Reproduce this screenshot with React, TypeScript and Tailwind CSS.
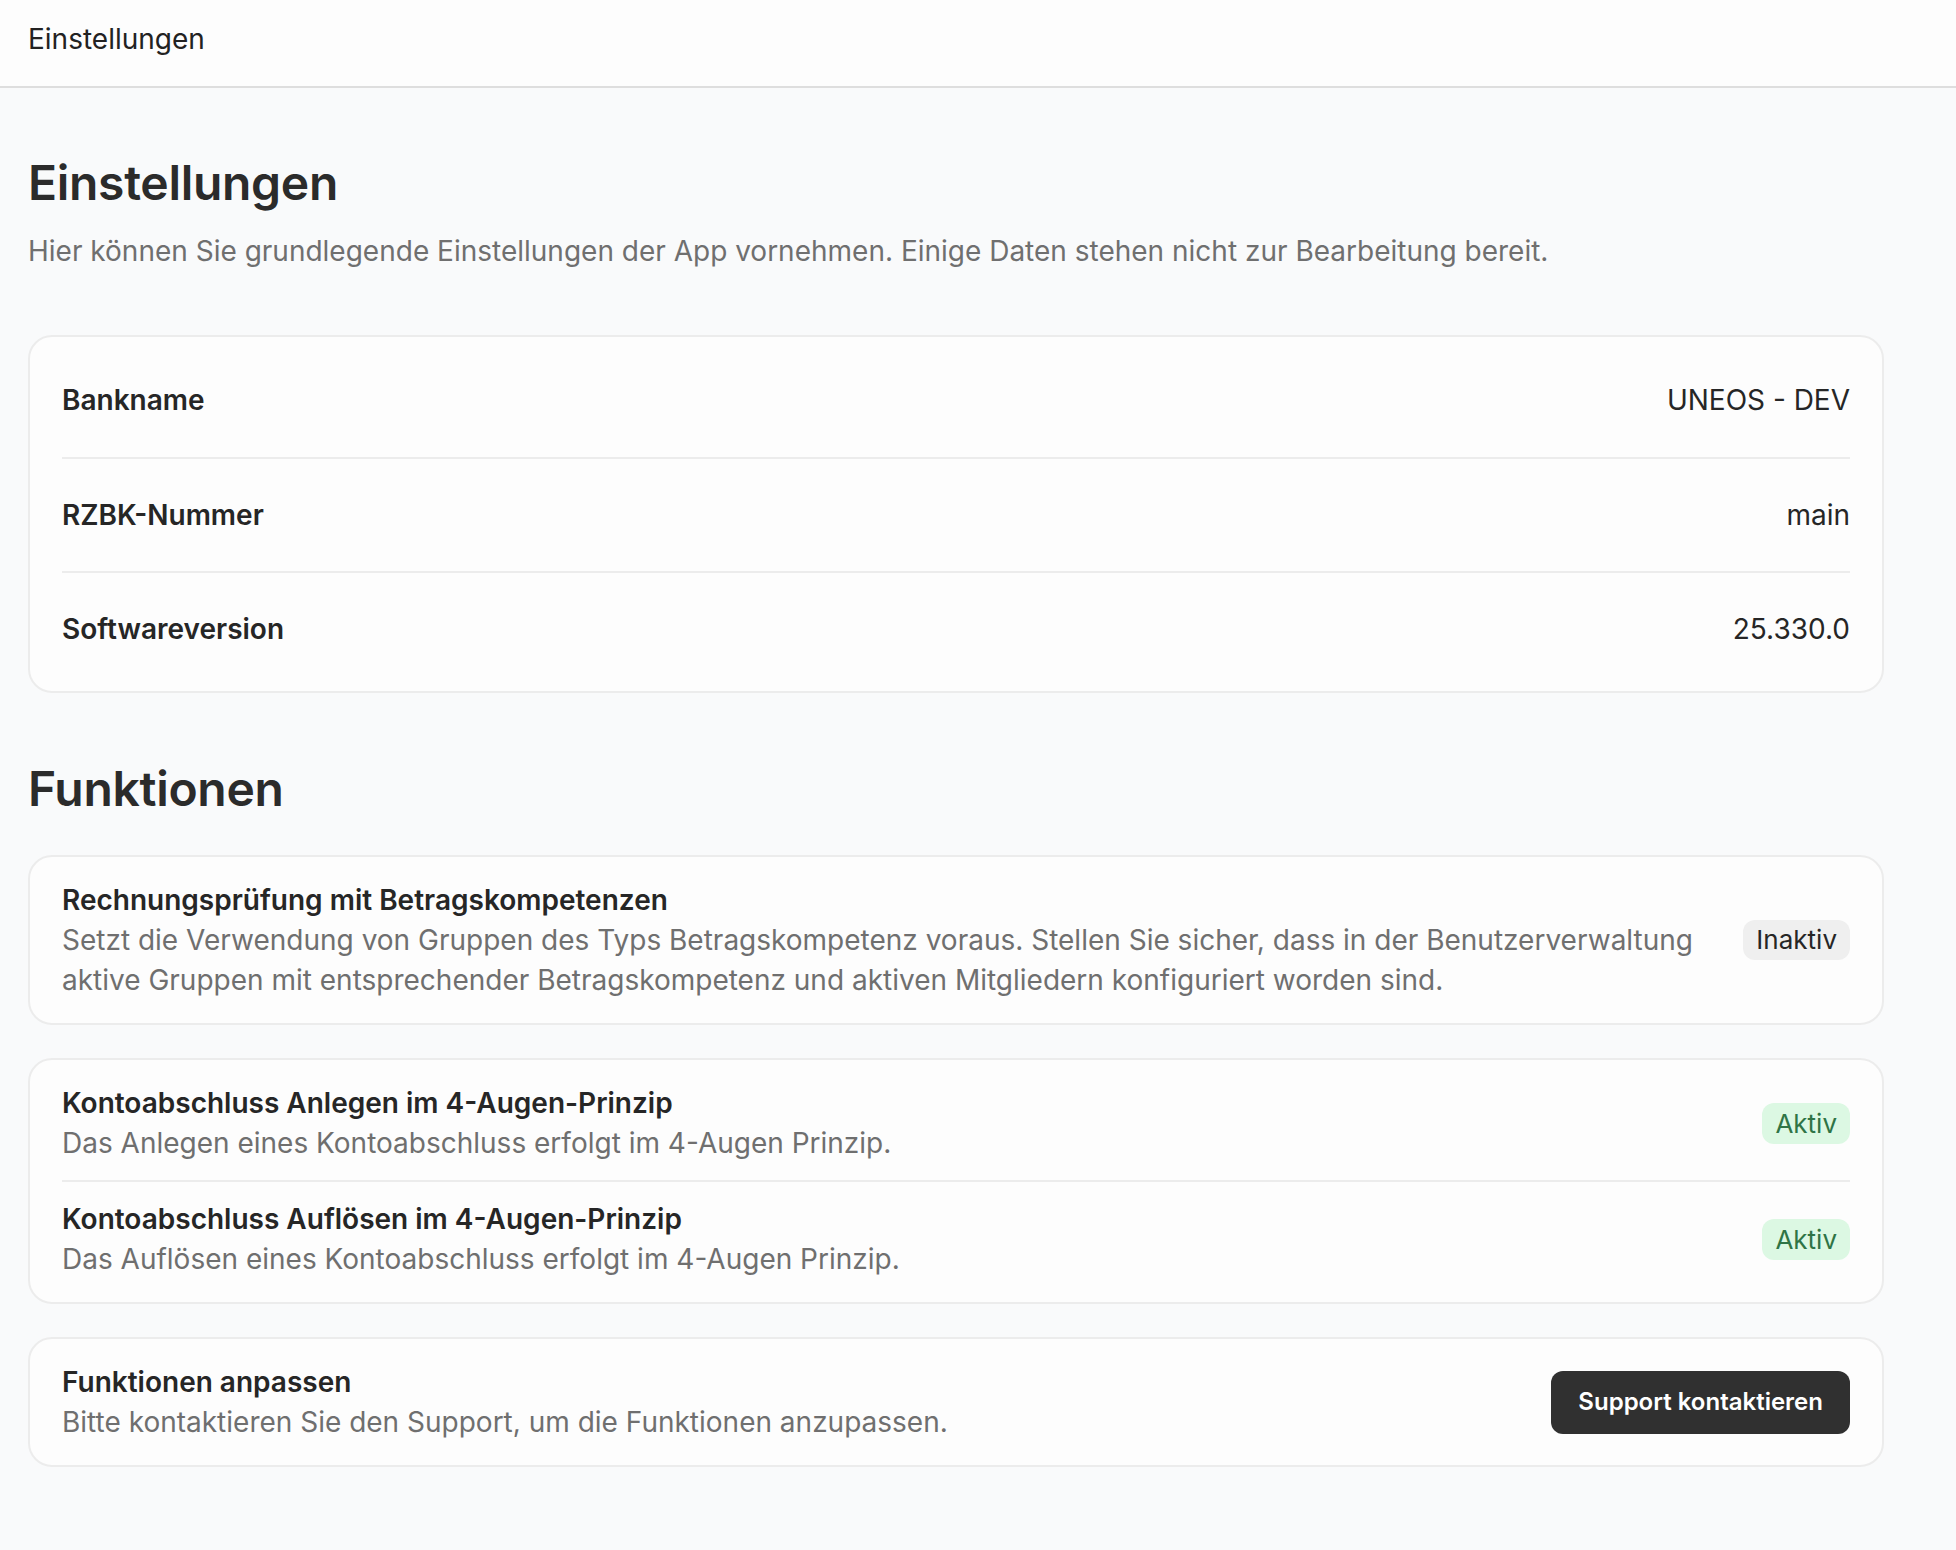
import React from 'react';

const infoRows = [
  { label: 'Bankname', value: 'UNEOS - DEV' },
  { label: 'RZBK-Nummer', value: 'main' },
  { label: 'Softwareversion', value: '25.330.0' },
];

const StatusBadge = ({ active }: { active: boolean }) =>
  active ? (
    <span className="shrink-0 rounded-[12px] bg-[#dcf8e3] px-[13px] py-[1px] text-[26px] leading-[39px] text-[#2f7446]">
      Aktiv
    </span>
  ) : (
    <span className="shrink-0 rounded-[12px] bg-[#efefef] px-[13px] py-[1px] text-[26px] leading-[38px] text-[#262626]">
      Inaktiv
    </span>
  );

const FeatureText = ({ title, children }: { title: string; children: React.ReactNode }) => (
  <div className="min-w-0 flex-1">
    <div className="text-[28px] font-semibold leading-[40px] text-[#262626]">{title}</div>
    <div className="text-[28px] leading-[40px] text-[#6f6f6f]">{children}</div>
  </div>
);

export default function App() {
  return (
    <div className="min-h-[1550px] bg-[#f9fafb] font-['Inter',sans-serif] text-[#2b2b2b]">
      <header className="h-[88px] border-b-2 border-[#dedede] bg-[#fdfdfd] pl-[28px] pt-[19px]">
        <span className="text-[28px] leading-[40px] text-[#222]">Einstellungen</span>
      </header>

      <main className="pl-[28px] pt-[63px]">
        <div className="w-[1856px]">
          <h1 className="text-[48px] font-semibold leading-[64px] tracking-[-0.3px] text-[#2b2b2b]">Einstellungen</h1>
          <p className="mt-[16px] text-[28px] leading-[40px] text-[#6f6f6f]">
            Hier können Sie grundlegende Einstellungen der App vornehmen. Einige Daten stehen nicht zur Bearbeitung bereit.
          </p>

          <div className="mt-[64px] rounded-[24px] border-2 border-[#ececec] bg-[#fdfdfd] px-[32px] py-[6px]">
            {infoRows.map((row, i) => (
              <div
                key={row.label}
                className={`flex h-[114px] items-center justify-between text-[28px] ${i > 0 ? 'border-t-2 border-[#ececec]' : ''}`}
              >
                <span className="font-semibold text-[#262626]">{row.label}</span>
                <span className="text-[#262626]">{row.value}</span>
              </div>
            ))}
          </div>

          <h2 className="mt-[64px] text-[48px] font-semibold leading-[64px] tracking-[-0.3px] text-[#2b2b2b]">Funktionen</h2>

          <div className="mt-[34px] flex flex-col gap-[33px]">
            <div className="flex items-center gap-[40px] rounded-[24px] border-2 border-[#ececec] bg-[#fdfdfd] px-[32px] py-[23px]">
              <FeatureText title="Rechnungsprüfung mit Betragskompetenzen">
                Setzt die Verwendung von Gruppen des Typs Betragskompetenz voraus. Stellen Sie sicher, dass in der Benutzerverwaltung aktive Gruppen mit entsprechender Betragskompetenz und aktiven Mitgliedern konfiguriert worden sind.
              </FeatureText>
              <StatusBadge active={false} />
            </div>

            <div className="rounded-[24px] border-2 border-[#ececec] bg-[#fdfdfd] px-[32px] py-[23px]">
              <div className="flex items-center gap-[40px] pb-[17px]">
                <FeatureText title="Kontoabschluss Anlegen im 4-Augen-Prinzip">
                  Das Anlegen eines Kontoabschluss erfolgt im 4-Augen Prinzip.
                </FeatureText>
                <StatusBadge active />
              </div>
              <div className="flex items-center gap-[40px] border-t-2 border-[#ececec] pt-[17px]">
                <FeatureText title="Kontoabschluss Auflösen im 4-Augen-Prinzip">
                  Das Auflösen eines Kontoabschluss erfolgt im 4-Augen Prinzip.
                </FeatureText>
                <StatusBadge active />
              </div>
            </div>

            <div className="flex items-center gap-[40px] rounded-[24px] border-2 border-[#ececec] bg-[#fdfdfd] px-[32px] py-[23px]">
              <FeatureText title="Funktionen anpassen">
                Bitte kontaktieren Sie den Support, um die Funktionen anzupassen.
              </FeatureText>
              <button className="h-[63px] shrink-0 rounded-[12px] bg-[#303030] px-[27px] text-[24px] font-semibold text-white">
                Support kontaktieren
              </button>
            </div>
          </div>
        </div>
      </main>
    </div>
  );
}
